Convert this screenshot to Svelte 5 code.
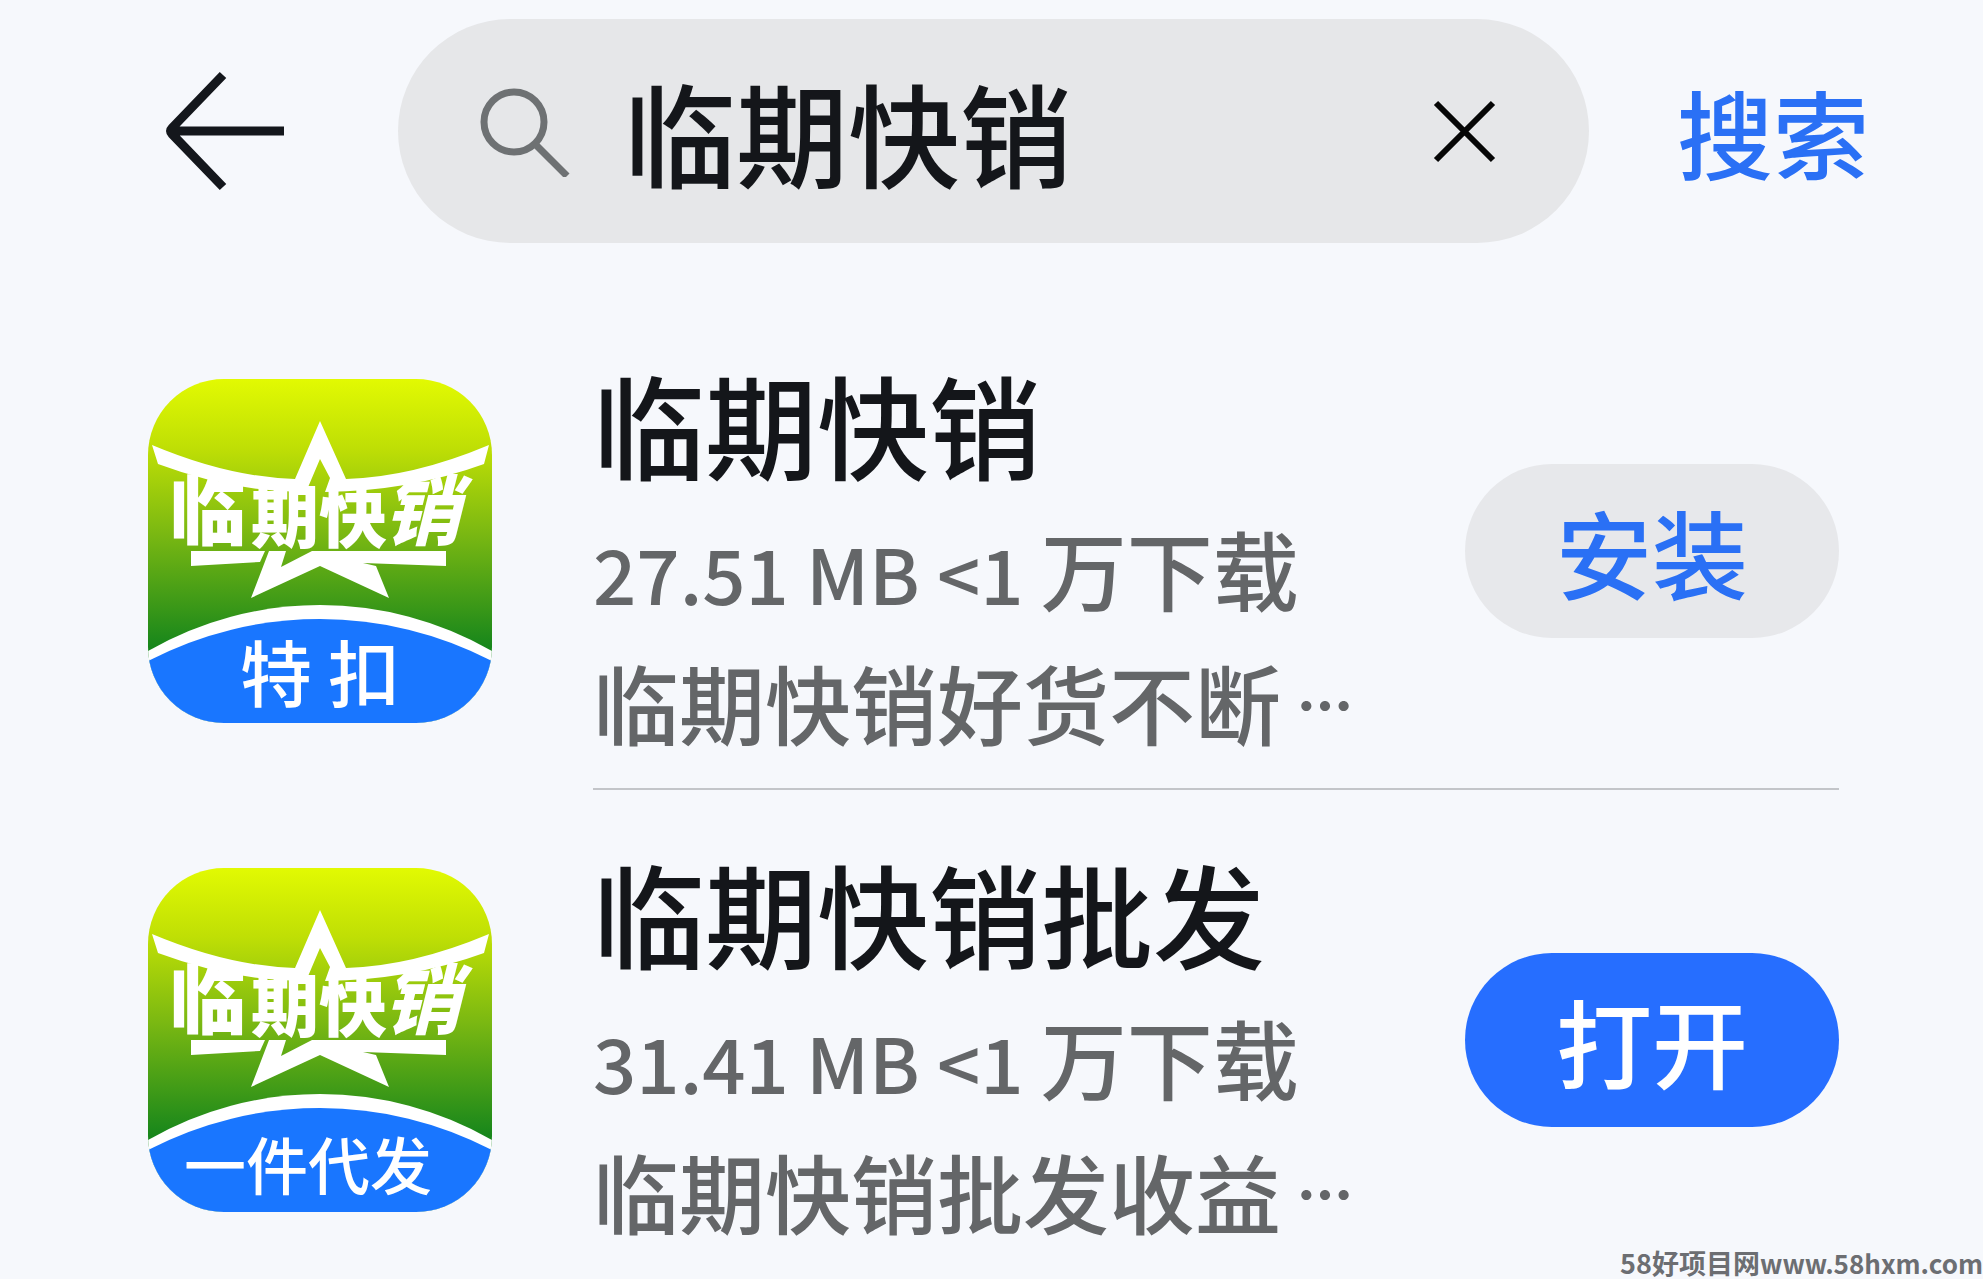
<script lang="ts">
  let query = $state('临期快销');

  const apps = [
    { name: '临期快销', size: '27.51 MB', desc: '临期快销好货不断', tag: '特 扣', tagX: 172, tagSize: 72, installed: false },
    { name: '临期快销批发', size: '31.41 MB', desc: '临期快销批发收益', tag: '一件代发', tagX: 160, tagSize: 62, installed: true },
  ];
</script>

<main class="page">
  <form class="search-bar" onsubmit={(e) => e.preventDefault()}>
    <button type="button" class="back" aria-label="返回">
      <svg viewBox="0 0 130 124" fill="none" stroke="#14171c" stroke-width="9">
        <path d="M65 6 L14 59 Q11 62 14 65 L65 118 M14 62 H126" />
      </svg>
    </button>
    <div class="field">
      <svg class="lens" viewBox="0 0 92 92" fill="none" stroke="#6e7173" stroke-width="7">
        <circle cx="36" cy="37" r="30" />
        <path d="M57 59 L89 91" />
      </svg>
      <input type="text" aria-label="搜索应用" bind:value={query} />
      <button type="button" class="clear" aria-label="清除" onclick={() => (query = '')}>
        <svg viewBox="0 0 64 64" fill="none" stroke="#060606" stroke-width="6">
          <path d="M3 4 L60 61 M60 4 L3 61" />
        </svg>
      </button>
    </div>
    <button type="submit" class="submit">搜索</button>
  </form>

  <ul class="results">
    {#each apps as app, i}
      <li class="item">
        <svg class="logo" viewBox="0 0 344 344">
          <defs>
            <linearGradient id="leaf-{i}" x1="0" y1="0" x2="0" y2="1">
              <stop offset="0" stop-color="#e2fa02" />
              <stop offset="0.2" stop-color="#bfdf05" />
              <stop offset="0.45" stop-color="#7ab812" />
              <stop offset="0.78" stop-color="#17861b" />
            </linearGradient>
            <clipPath id="tile-{i}">
              <rect width="344" height="344" rx="76" />
            </clipPath>
          </defs>
          <g clip-path="url(#tile-{i})">
            <rect width="344" height="344" fill="url(#leaf-{i})" />
            <path fill="#fff" d="M0 272 A345 345 0 0 1 344 272 V344 H0 Z" />
            <path fill="#1976ff" d="M0 282 A373 373 0 0 1 344 282 V344 H0 Z" />
          </g>
          <g fill="#fff">
            <path d="M4 66 Q80 98 147 100 L172 42 L198 100 Q265 98 341 66 L336 85 Q262 112 177 113 L182 99 L172 80 L158 113 Q85 113 10 85 Z" />
            <path d="M43 172 H117 L112 183 L43 187 Z" />
            <path d="M121 172 H138 L133 188 L164 172 H298 V187 L215 184 L228 187 L241 219 L172 187 L103 219 Z" />
            <g class="wordmark">
              <text class="outer" x="22" y="160">临</text>
              <text class="inner" x="103" y="163">期快</text>
              <text class="outer lean" x="236" y="160">销</text>
            </g>
            <text class="tag" x={app.tagX} y="322" text-anchor="middle" font-size={app.tagSize}>{app.tag}</text>
          </g>
        </svg>
        <div class="body">
          <div class="info">
            <h2>{app.name}</h2>
            <p class="meta"><span class="latin">{`${app.size} <1 `}</span>万下载</p>
            <p class="desc">{app.desc}<span class="more">⋯</span></p>
          </div>
          <button type="button" class="action" class:open={app.installed}>{app.installed ? '打开' : '安装'}</button>
        </div>
      </li>
    {/each}
  </ul>

  <a class="watermark" href="http://www.58hxm.com">58好项目网<span class="domain">www.58hxm.com</span></a>
</main>

<style>
  :global(body) {
    margin: 0;
    background: #f6f8fc;
  }

  .page {
    position: relative;
    font-family: 'Noto Sans CJK SC', sans-serif;
    color: #14161a;
  }

  button {
    font: inherit;
    border: 0;
    padding: 0;
    background: none;
    cursor: pointer;
  }

  svg {
    display: block;
  }

  .search-bar {
    display: flex;
    align-items: center;
    padding: 19px 114px 58px 158px;
  }

  .back svg {
    width: 130px;
    height: 124px;
  }

  .field {
    flex: 1;
    min-width: 0;
    display: flex;
    align-items: center;
    height: 224px;
    box-sizing: border-box;
    margin: 0 88px 0 110px;
    padding: 0 92px 0 80px;
    border-radius: 112px;
    background: #e6e7e9;
  }

  .lens {
    flex: none;
    width: 92px;
    height: 92px;
  }

  input {
    flex: 1;
    min-width: 0;
    margin: 0 24px 0 54px;
    padding: 0;
    border: 0;
    outline: 0;
    background: none;
    font: inherit;
    font-size: 112px;
    font-weight: 500;
    line-height: 160px;
    height: 160px;
    color: inherit;
  }

  .clear svg {
    width: 64px;
    height: 64px;
  }

  .submit {
    flex: none;
    font-size: 96px;
    font-weight: 500;
    line-height: 140px;
    color: #2a70f5;
  }

  .results {
    list-style: none;
    margin: 0;
    padding: 0 144px 0 148px;
  }

  .item {
    display: flex;
    gap: 101px;
  }

  .logo {
    flex: none;
    width: 344px;
    height: 344px;
    margin-top: 78px;
  }

  .wordmark {
    font-weight: 900;
  }

  .outer {
    font-size: 76px;
  }

  .inner {
    font-size: 68px;
  }

  .lean {
    font-style: italic;
  }

  .tag {
    font-weight: 500;
  }

  .body {
    flex: 1;
    min-width: 0;
    display: flex;
    align-items: center;
    justify-content: space-between;
    box-sizing: border-box;
    height: 489px;
    padding-top: 12px;
    border-bottom: 2px solid #c3c5c9;
  }

  .item:last-child .body {
    border-bottom-color: transparent;
  }

  .info {
    padding-top: 8px;
    white-space: nowrap;
  }

  h2,
  p {
    margin: 0;
  }

  h2 {
    font-size: 112px;
    font-weight: 500;
    line-height: 160px;
  }

  .meta,
  .desc {
    font-size: 86px;
    font-weight: 500;
    line-height: 130px;
    color: #646668;
  }

  .latin {
    font-size: 76px;
    white-space: pre;
  }

  .more {
    margin-left: 16px;
    font-size: 56px;
    font-weight: 900;
    line-height: 56px;
    vertical-align: 12px;
  }

  .action {
    flex: none;
    width: 374px;
    height: 174px;
    border-radius: 87px;
    background: #e7e8eb;
    color: #2a70f5;
    font-size: 96px;
    font-weight: 500;
    line-height: 140px;
  }

  .action.open {
    background: #266eff;
    color: #fff;
  }

  .watermark {
    position: absolute;
    right: 0;
    bottom: 0;
    font-size: 27px;
    font-weight: 700;
    line-height: 32px;
    color: #6c6e72;
    text-decoration: none;
  }

  .domain {
    font-size: 26px;
  }
</style>
